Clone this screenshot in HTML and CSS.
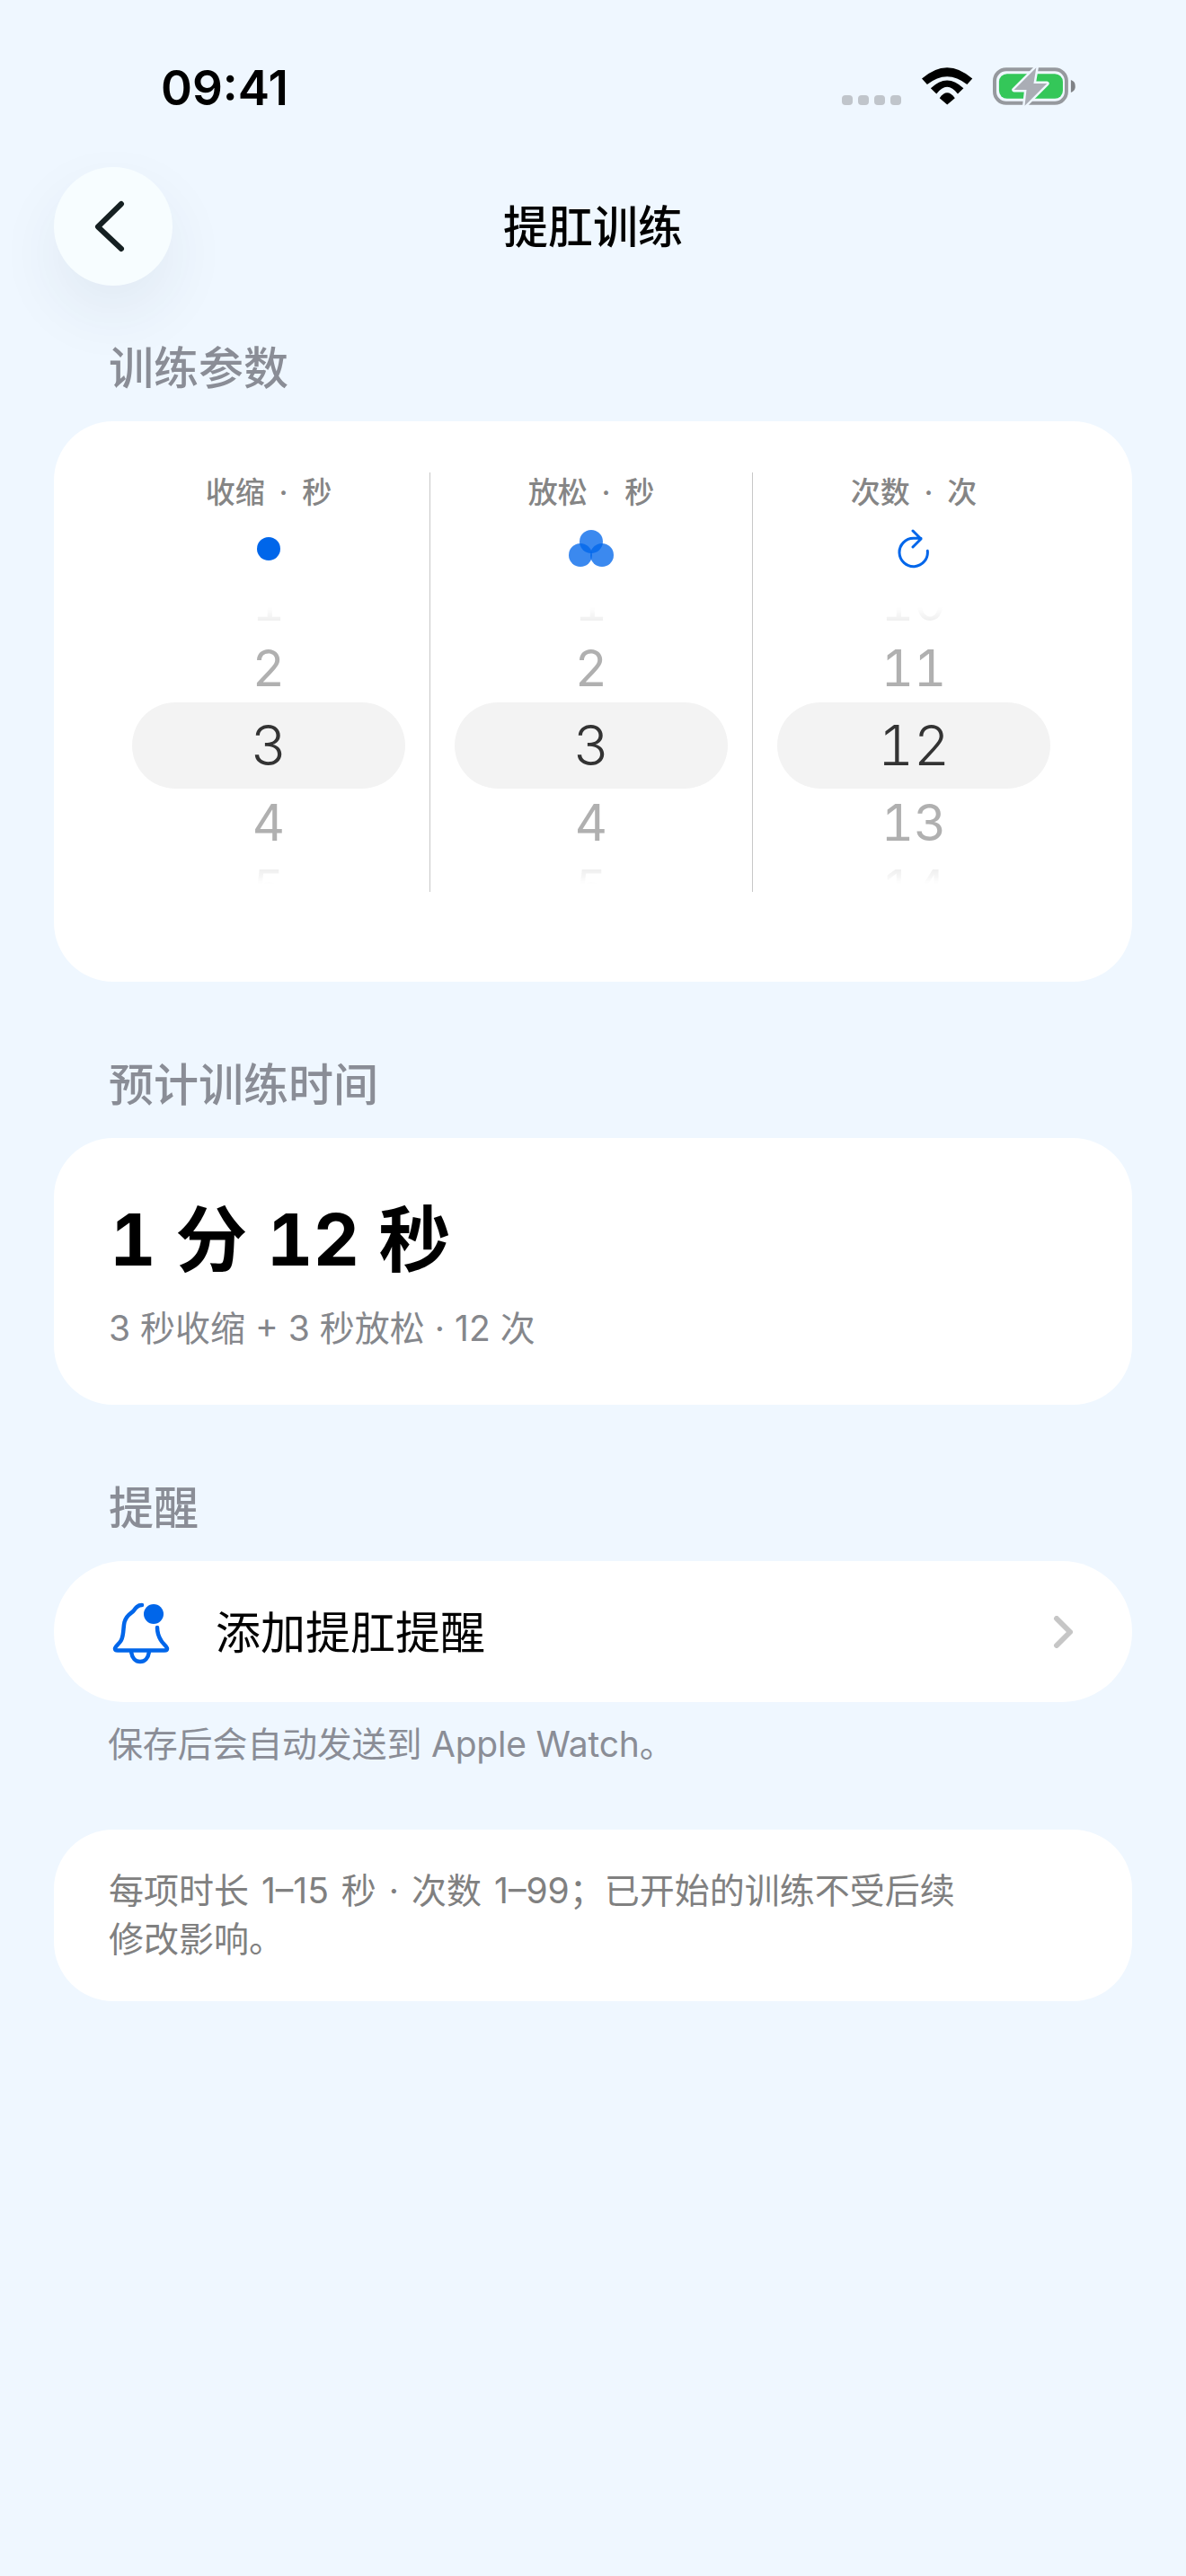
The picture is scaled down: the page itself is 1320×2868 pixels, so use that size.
FILE: index.html
```html
<!DOCTYPE html>
<html lang="zh-CN">
<head>
  <meta charset="UTF-8">
  <meta name="viewport" content="width=device-width, initial-scale=1.0">
  <title>提肛训练</title>
  <link rel="stylesheet" href="styles.css">
</head>
<body>
  <header class="status-bar">
    <span class="status-time">09:41</span>
    <div class="status-icons">
      <div class="signal-dots"><i></i><i></i><i></i><i></i></div>
      <svg class="wifi-icon" width="58" height="43" viewBox="0 0 58 43">
        <path d="M0 12.5Q28.5-12.5 57 12.5L51 19Q28.5 1 6 19Z"/>
        <path d="M10 23.3Q28.5 5.3 47 23.3L40.5 29.5Q28.5 13.9 16.5 29.5Z"/>
        <path d="M20 34.3Q28.5 22.3 37.3 34.3L28.6 41.7Z"/>
      </svg>
      <svg class="battery-icon" width="94" height="46" viewBox="0 0 94 46">
        <rect x="2" y="4" width="81" height="38" rx="13" fill="none" stroke="#96999e" stroke-width="4"/>
        <rect x="7" y="9" width="72" height="28" rx="9" fill="#34c759"/>
        <path d="M88 16c3 1 5 3 5 7s-2 6-5 7Z" fill="#7f8286"/>
        <path d="M49 2L24 27H38L36 45L61 20H46Z" fill="#aaadb5" stroke="#eff7ff" stroke-width="5" stroke-linejoin="round" paint-order="stroke"/>
      </svg>
    </div>
  </header>

  <nav class="nav-bar">
    <button class="back-button" aria-label="返回">
      <svg width="38" height="62" viewBox="0 0 38 62">
        <path d="M33 6L7 31.500L33 56" fill="none" stroke="#152022" stroke-width="6" stroke-linecap="round" stroke-linejoin="round"/>
      </svg>
    </button>
    <h1 class="nav-title">提肛训练</h1>
  </nav>

  <main>
    <h2 class="section-title first">训练参数</h2>
    <section class="card picker-card">
      <div class="picker-column">
        <div class="picker-label">收缩 · 秒</div>
        <div class="picker-icon">
          <svg width="44" height="44" viewBox="0 0 44 44"><circle cx="22" cy="22" r="13" fill="#0066ea"/></svg>
        </div>
        <div class="wheel">
          <div class="wheel-row">1</div>
          <div class="wheel-row near">2</div>
          <div class="wheel-row selected">3</div>
          <div class="wheel-row near">4</div>
          <div class="wheel-row">5</div>
        </div>
      </div>
      <div class="picker-column">
        <div class="picker-label">放松 · 秒</div>
        <div class="picker-icon">
          <svg width="54" height="44" viewBox="0 0 54 44">
            <g fill="#0066ea" fill-opacity="0.77">
              <circle cx="27" cy="14" r="13"/>
              <circle cx="15" cy="29" r="13"/>
              <circle cx="39" cy="29" r="13"/>
            </g>
          </svg>
        </div>
        <div class="wheel">
          <div class="wheel-row">1</div>
          <div class="wheel-row near">2</div>
          <div class="wheel-row selected">3</div>
          <div class="wheel-row near">4</div>
          <div class="wheel-row">5</div>
        </div>
      </div>
      <div class="picker-column">
        <div class="picker-label">次数 · 次</div>
        <div class="picker-icon">
          <svg width="44" height="44" viewBox="0 0 44 44">
            <path d="M37.300 24.300A15.700 15.700 0 1 1 21.700 10.300H30M21 2L30 11L21 20" fill="none" stroke="#0066ea" stroke-width="3" stroke-linecap="round" stroke-linejoin="round"/>
          </svg>
        </div>
        <div class="wheel">
          <div class="wheel-row">10</div>
          <div class="wheel-row near">11</div>
          <div class="wheel-row selected">12</div>
          <div class="wheel-row near">13</div>
          <div class="wheel-row">14</div>
        </div>
      </div>
    </section>

    <h2 class="section-title">预计训练时间</h2>
    <section class="card time-card">
      <div class="time-total">1 分 12 秒</div>
      <div class="time-detail">3 秒收缩 + 3 秒放松 · 12 次</div>
    </section>

    <h2 class="section-title">提醒</h2>
    <section class="card reminder-card">
      <svg class="bell-icon" width="66" height="70" viewBox="24 24 66 70">
        <path d="M58 27C53 27 51 30 49 33C47 36 41 37 38.500 46C37 52 38 60 35 66C33 70 28 73 28 75.500C28 77 29 77.500 31 77.500H83C85 77.500 86 77 86 75.500C86 73 81 70 79 66C76 61 75 58 75 52" fill="none" stroke="#0066ea" stroke-width="4.500" stroke-linecap="round" stroke-linejoin="round"/>
        <path d="M46 79C47 86 51 90 56 90C61 90 65 86 66 79" fill="none" stroke="#0066ea" stroke-width="4.500"/>
        <circle cx="71" cy="37" r="11" fill="#0066ea"/>
      </svg>
      <span class="reminder-text">添加提肛提醒</span>
      <svg class="chevron-icon" width="24" height="36" viewBox="0 0 24 36">
        <path d="M6 3L21 18L6 33" fill="none" stroke="#c6c6c6" stroke-width="6" stroke-linecap="round" stroke-linejoin="round"/>
      </svg>
    </section>
    <p class="reminder-note">保存后会自动发送到 Apple Watch。</p>

    <section class="card info-card">
      <p>每项时长 1–15 秒 · 次数 1–99；已开始的训练不受后续修改影响。</p>
    </section>
  </main>
</body>
</html>
```

FILE: styles.css
```css
body {
  margin: 0;
  width: 1320px;
  height: 2868px;
  overflow: hidden;
  background-color: #eff7ff;
  font-family: Inter, "Noto Sans CJK SC", sans-serif;
}

.status-bar {
  display: flex;
  justify-content: space-between;
  align-items: center;
  height: 56px;
  margin-top: 70px;
  padding: 0 122px 0 179px;
}

.status-time {
  font-size: 53px;
  font-weight: 600;
  color: #000;
}

.status-icons {
  display: flex;
  align-items: flex-start;
  width: 261px;
  height: 56px;
}

.signal-dots {
  display: flex;
  gap: 6px;
  margin-top: 36px;
  margin-right: 23px;
}

.signal-dots i {
  width: 12px;
  height: 11px;
  border-radius: 4px;
  background-color: #c0c5cb;
}

.wifi-icon {
  margin-top: 5px;
  margin-right: 22px;
}

.battery-icon {
  margin-top: 3px;
}

.nav-bar {
  display: grid;
  grid-template-columns: 132px 1fr 132px;
  align-items: center;
  margin-top: 60px;
  padding: 0 60px;
}

.back-button {
  display: flex;
  align-items: center;
  justify-content: center;
  width: 132px;
  height: 132px;
  padding: 0 10px 0 0;
  border: none;
  border-radius: 50%;
  background-color: #f7fdff;
  box-shadow: 0 30px 70px rgba(40, 60, 90, 0.07);
}

.nav-title {
  margin: 0 0 7px;
  text-align: center;
  font-size: 50px;
  font-weight: 500;
  color: #000;
}

.section-title {
  margin: 85px 0 29px 121px;
  height: 60px;
  line-height: 60px;
  font-size: 50px;
  font-weight: 500;
  color: #8a8d96;
}

.section-title.first {
  margin-top: 62px;
}

.card {
  margin: 0 60px;
  border-radius: 66px;
  background-color: #fff;
}

.picker-card {
  display: grid;
  grid-template-columns: repeat(3, 359px);
  padding: 57px 60px 100px;
}

.picker-column {
  display: flex;
  flex-direction: column;
  align-items: center;
  height: 467px;
  border-right: 1px solid #c8c8c8;
}

.picker-column:last-child {
  border-right-color: transparent;
}

.picker-label {
  height: 44px;
  line-height: 44px;
  font-size: 33px;
  font-weight: 500;
  word-spacing: 7px;
  color: #858585;
}

.picker-icon {
  display: flex;
  justify-content: center;
  height: 44px;
  margin-top: 19px;
  margin-bottom: 43px;
}

.wheel {
  display: flex;
  flex-direction: column;
  justify-content: center;
  align-items: center;
  width: 304px;
  height: 308px;
  overflow: hidden;
  font-variant-numeric: tabular-nums;
  -webkit-mask-image: linear-gradient(to bottom, transparent 0, rgba(0, 0, 0, 0.2) 5%, #000 13%, #000 87%, rgba(0, 0, 0, 0.2) 95%, transparent 100%);
  mask-image: linear-gradient(to bottom, transparent 0, rgba(0, 0, 0, 0.2) 5%, #000 13%, #000 87%, rgba(0, 0, 0, 0.2) 95%, transparent 100%);
}

.wheel-row {
  flex-shrink: 0;
  width: 100%;
  height: 70px;
  line-height: 70px;
  text-align: center;
  font-size: 56px;
  font-weight: 400;
  color: #b0b0b0;
}

.wheel-row.near {
  height: 76px;
  line-height: 76px;
}

.wheel-row.selected {
  height: 96px;
  line-height: 96px;
  border-radius: 48px;
  background-color: #f3f3f3;
  font-size: 62px;
  font-weight: 350;
  color: #333;
}

.time-card {
  height: 297px;
  padding: 58px 62px 0;
  box-sizing: border-box;
}

.time-total {
  height: 110px;
  line-height: 110px;
  font-size: 80px;
  font-weight: 700;
  font-variant-numeric: tabular-nums;
  color: #000;
}

.time-detail {
  margin: 19px 0 0 -1px;
  line-height: 50px;
  font-size: 39px;
  color: #85878c;
}

.reminder-card {
  display: flex;
  align-items: center;
  height: 157px;
  padding: 0 64px;
  border-radius: 78px;
  box-sizing: border-box;
}

.bell-icon {
  margin-top: 5px;
  margin-right: 50px;
}

.reminder-text {
  flex: 1;
  margin-bottom: 6px;
  font-size: 50px;
  color: #000;
}

.chevron-icon {
  margin-right: 2px;
}

.reminder-note {
  margin: 20px 0 68px 120px;
  line-height: 54px;
  font-size: 39px;
  letter-spacing: -0.2px;
  color: #8a8d96;
}

.info-card {
  height: 191px;
  padding: 41px 61px 0;
  box-sizing: border-box;
}

.info-card p {
  max-width: 950px;
  margin: 0;
  line-height: 54px;
  font-size: 39px;
  word-spacing: 3px;
  color: #808080;
}
```
